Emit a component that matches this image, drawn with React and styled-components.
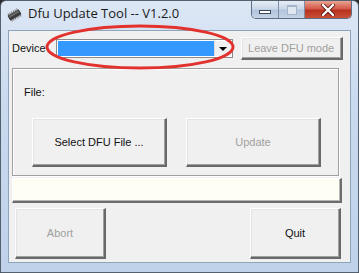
import React from 'react';
import styled, { createGlobalStyle } from 'styled-components';

const Global = createGlobalStyle`
  html, body { margin: 0; padding: 0; background: #2b2b2b; }
  body { font-family: "Liberation Sans", Arial, sans-serif; }
`;

const Window = styled.div`
  position: relative;
  width: 359px;
  height: 273px;
  box-sizing: border-box;
  background: linear-gradient(180deg, #dce7f5 0%, #c9d9ee 40%, #bfd2ea 100%);
  border: 1px solid #55606e;
  border-radius: 6px 6px 0 0;
  display: flex;
  flex-direction: column;
  overflow: hidden;
`;

const TitleBar = styled.div`
  height: 29px;
  display: flex;
  align-items: flex-start;
  flex-shrink: 0;
`;

const TitleIcon = styled.svg`
  margin: 7px 0 0 5px;
  width: 17px;
  height: 14px;
`;

const TitleText = styled.div`
  margin: 3px 0 0 5px;
  font-family: "Open Sans", "Noto Sans", sans-serif;
  font-size: 13px;
  color: #1a1a1a;
`;

const Controls = styled.div`
  margin-left: auto;
  margin-right: 6px;
  display: flex;
  height: 17px;
  border: 1px solid #5d6f86;
  border-top: none;
  border-radius: 0 0 5px 5px;
  overflow: hidden;
`;

const CtrlButton = styled.div`
  width: ${p => p.$w}px;
  display: flex;
  align-items: center;
  justify-content: center;
  background: ${p => p.$close
    ? 'linear-gradient(180deg, #e8a493 0%, #d4594a 45%, #b8321f 55%, #c94f38 100%)'
    : 'linear-gradient(180deg, #e6edf6 0%, #cbd8e9 45%, #b3c5dc 55%, #c3d3e7 100%)'};
  & + & { border-left: 1px solid #7d8ea5; }
`;

const MinGlyph = styled.div`
  width: 10px;
  height: 2px;
  margin-top: 5px;
  background: #fff;
  border: 1px solid #3d4a5c;
`;

const MaxGlyph = styled.div`
  width: 8px;
  height: 7px;
  border: 1px solid #a7b5c8;
  border-top-width: 2px;
  background: #dfe7f1;
`;

const Client = styled.div`
  margin: 0 7px;
  height: 233px;
  background: #f0f0f0;
  border: 1px solid #8ea3bc;
  box-sizing: border-box;
  display: flex;
  flex-direction: column;
  font-size: 11px;
  color: #111;
`;

const DeviceRow = styled.div`
  display: flex;
  align-items: center;
  padding: 5px 0 0 3px;
  height: 24px;
`;

const Label = styled.span`
  font-size: 11px;
`;

const Combo = styled.div`
  margin-left: 10px;
  width: 177px;
  height: 19px;
  box-sizing: border-box;
  border: 1px solid #8b8b8b;
  background: #fff;
  display: flex;
  padding: 1px;
`;

const ComboSel = styled.div`
  flex: 1;
  background: #3399ff;
`;

const ComboArrow = styled.div`
  width: 16px;
  display: flex;
  align-items: center;
  justify-content: center;
  background: #f0f0f0;
  border-left: 1px solid #dcdcdc;
  &::after {
    content: '';
    border-left: 4px solid transparent;
    border-right: 4px solid transparent;
    border-top: 4px solid #000;
    margin-top: 1px;
  }
`;

const Button = styled.div`
  width: ${p => p.$w}px;
  height: ${p => p.$h}px;
  box-sizing: border-box;
  display: flex;
  align-items: center;
  justify-content: center;
  background: #f0f0f0;
  border-top: 1px solid #fff;
  border-left: 1px solid #fff;
  border-right: 2px solid #696969;
  border-bottom: 2px solid #696969;
  box-shadow: inset -1px -1px 0 #a0a0a0, inset 1px 1px 0 #e3e3e3;
  color: ${p => (p.$disabled ? '#a0a0a0' : '#111')};
  font-size: 11px;
`;

const LeaveButton = styled(Button)`
  margin-left: 8px;
`;

const GroupBox = styled.div`
  margin: 8px 0 0 3px;
  width: 327px;
  height: 108px;
  box-sizing: border-box;
  border: 1px solid #a0a0a0;
  box-shadow: 1px 1px 0 #fff, inset 1px 1px 0 #fff;
  padding: 17px 0 0 11px;
  display: flex;
  flex-direction: column;
`;

const ButtonRow = styled.div`
  margin-top: 20px;
  display: flex;
  gap: 19px;
  padding-left: 8px;
`;

const Progress = styled.div`
  margin: 2px 0 0 3px;
  width: 330px;
  height: 25px;
  box-sizing: border-box;
  background: #fffef4;
  border-top: 1px solid #fff;
  border-left: 1px solid #fff;
  border-right: 2px solid #6d6d6d;
  border-bottom: 2px solid #6d6d6d;
  box-shadow: inset -1px -1px 0 #b5b5b5;
`;

const BottomRow = styled.div`
  margin-top: 5px;
  padding: 0 9px 0 6px;
  display: flex;
  justify-content: space-between;
`;

const Annotation = styled.svg`
  position: absolute;
  left: 0;
  top: 0;
  pointer-events: none;
`;

function ChipIcon() {
  return (
    <TitleIcon viewBox="0 0 17 14">
      <g transform="rotate(-30 8.5 7)">
        <rect x="2" y="4" width="13" height="6" rx="1" fill="#3a3a3a" />
        <rect x="3" y="5" width="11" height="2" fill="#6a6a6a" />
        {[3, 5, 7, 9, 11, 13].map(x => (
          <g key={x}>
            <rect x={x} y="2.5" width="1" height="1.5" fill="#777" />
            <rect x={x} y="10" width="1" height="1.5" fill="#777" />
          </g>
        ))}
      </g>
    </TitleIcon>
  );
}

export default function App() {
  return (
    <>
      <Global />
      <Window>
        <TitleBar>
          <ChipIcon />
          <TitleText>Dfu Update Tool -- V1.2.0</TitleText>
          <Controls>
            <CtrlButton $w={26}><MinGlyph /></CtrlButton>
            <CtrlButton $w={25}><MaxGlyph /></CtrlButton>
            <CtrlButton $w={46} $close>
              <svg width="14" height="12" viewBox="0 0 14 12">
                <path d="M2 1 L12 11 M12 1 L2 11" stroke="#5a1a10" strokeWidth="4" strokeLinecap="round" />
                <path d="M2 1 L12 11 M12 1 L2 11" stroke="#fff" strokeWidth="2.4" strokeLinecap="round" />
              </svg>
            </CtrlButton>
          </Controls>
        </TitleBar>
        <Client>
          <DeviceRow>
            <Label>Device</Label>
            <Combo>
              <ComboSel />
              <ComboArrow />
            </Combo>
            <LeaveButton $w={102} $h={23} $disabled>Leave DFU mode</LeaveButton>
          </DeviceRow>
          <GroupBox>
            <Label>File:</Label>
            <ButtonRow>
              <Button $w={135} $h={49}>Select DFU File ...</Button>
              <Button $w={135} $h={49} $disabled>Update</Button>
            </ButtonRow>
          </GroupBox>
          <Progress />
          <BottomRow>
            <Button $w={91} $h={51} $disabled>Abort</Button>
            <Button $w={91} $h={51}>Quit</Button>
          </BottomRow>
        </Client>
        <Annotation width="359" height="273">
          <ellipse cx="139" cy="46" rx="93" ry="21" fill="none" stroke="#e2322e" strokeWidth="3" />
        </Annotation>
      </Window>
    </>
  );
}
